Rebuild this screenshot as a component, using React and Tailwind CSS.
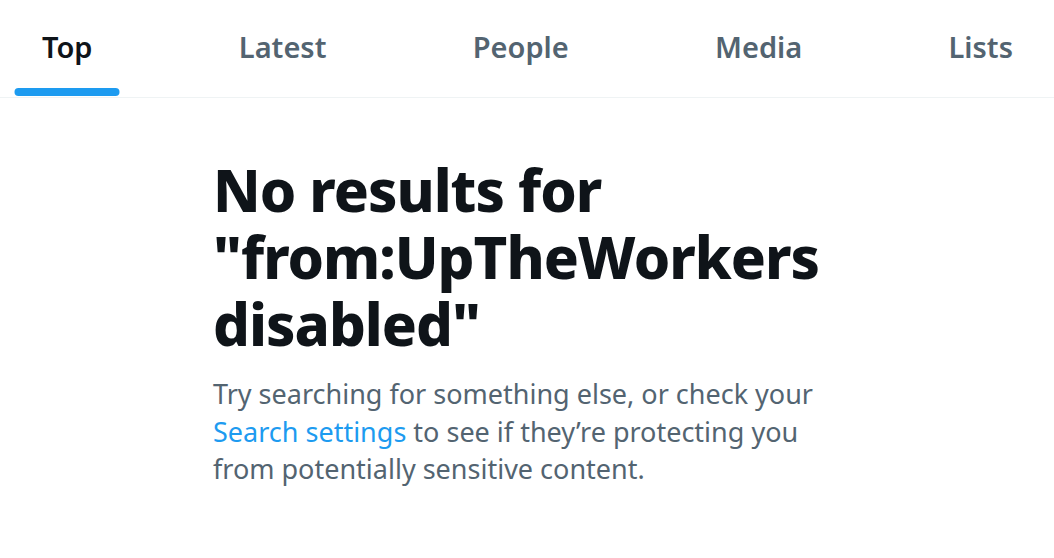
import React from "react";

const TABS = ["Top", "Latest", "People", "Media", "Lists"];

function Tabs() {
    return (
        <div className="h-[98px] border-b border-[#eff3f4] flex items-center justify-between pl-[42px] pr-[41px]">
            {TABS.map((tab, i) => (
                <div key={tab} className="relative h-full flex items-center">
                    <span
                        className={`text-[29px] font-semibold -mt-[4px] ${
                            i === 0 ? "text-[#0f1419] font-bold" : "text-[#536471]"
                        }`}
                    >
                        {tab}
                    </span>
                    {i === 0 && (
                        <div className="absolute left-1/2 -translate-x-1/2 bottom-[1px] w-[105px] h-[8px] rounded-full bg-[#1d9bf0]" />
                    )}
                </div>
            ))}
        </div>
    );
}

export default function App() {
    return (
        <div
            className="w-[1054px] h-[558px] bg-white overflow-hidden"
            style={{ fontFamily: '"Noto Sans", "Open Sans", sans-serif' }}
        >
            <Tabs />
            <div className="pl-[213px] pt-[58px]">
                <div className="max-w-[630px]">
                    <h1 className="text-[58px] leading-[67px] font-extrabold text-[#0f1419] tracking-[-1px]">
                        No results for "from:UpTheWorkers disabled"
                    </h1>
                    <p className="mt-[18px] text-[27px] leading-[37.5px] text-[#536471]">
                        <span className="block">Try searching for something else, or check your</span>
                        <span className="block">
                            <span className="text-[#1d9bf0]">Search settings</span> to see if they’re protecting you
                        </span>
                        <span className="block">from potentially sensitive content.</span>
                    </p>
                </div>
            </div>
        </div>
    );
}
